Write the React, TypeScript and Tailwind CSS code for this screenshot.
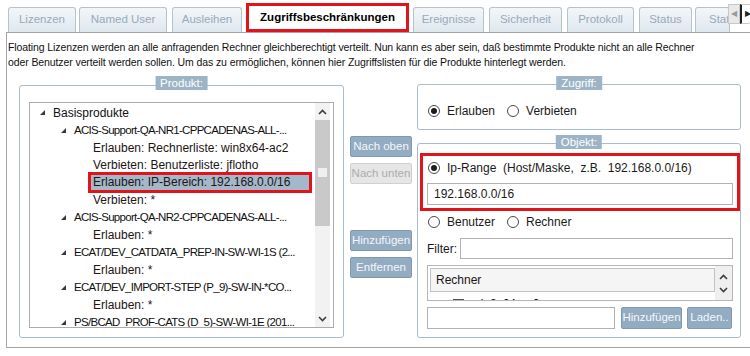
import React from 'react'

const tabs = [
  { label: 'Lizenzen', cls: 'ml-[8px] w-[68px] justify-center' },
  { label: 'Named User', cls: 'ml-[3px] w-[88px] justify-center' },
  { label: 'Ausleihen', cls: 'ml-[5px] w-[70px] justify-center' },
  { label: 'Zugriffsbeschränkungen', cls: 'ml-[4px] w-[163px]', active: true },
  { label: 'Ereignisse', cls: 'ml-[4px] w-[71px] justify-center' },
  { label: 'Sicherheit', cls: 'ml-[5px] w-[73px] justify-center' },
  { label: 'Protokoll', cls: 'ml-[5px] w-[67px] justify-center' },
  { label: 'Status', cls: 'ml-[5px] w-[53px] justify-center' },
  { label: 'Status', cls: 'ml-[3px] w-[35px] justify-start pl-[13px]' },
]

type Row = { level: 0 | 1 | 2; text: string; selected?: boolean }

const rows: Row[] = [
  { level: 0, text: 'Basisprodukte' },
  { level: 1, text: 'ACIS-Support-QA-NR1-CPPCADENAS-ALL-...' },
  { level: 2, text: 'Erlauben: Rechnerliste: win8x64-ac2' },
  { level: 2, text: 'Verbieten: Benutzerliste: jflotho' },
  { level: 2, text: 'Erlauben: IP-Bereich: 192.168.0.0/16', selected: true },
  { level: 2, text: 'Verbieten: *' },
  { level: 1, text: 'ACIS-Support-QA-NR2-CPPCADENAS-ALL-...' },
  { level: 2, text: 'Erlauben: *' },
  { level: 1, text: 'ECAT/DEV_CATDATA_PREP-IN-SW-WI-1S (2...' },
  { level: 2, text: 'Erlauben: *' },
  { level: 1, text: 'ECAT/DEV_IMPORT-STEP (P_9)-SW-IN-*CO...' },
  { level: 2, text: 'Erlauben: *' },
  { level: 1, text: 'PS/BCAD_PROF-CATS (D_5)-SW-WI-1E (201...' },
]

function Expander() {
  return (
    <svg width="5" height="5" viewBox="0 0 5 5" className="shrink-0">
      <polygon points="5,0 5,5 0,5" fill="#3a3a3a" />
    </svg>
  )
}

function Chevron({ down }: { down?: boolean }) {
  return (
    <svg width="9" height="6" viewBox="0 0 9 6">
      <polyline
        points={down ? '1,1 4.5,4.5 8,1' : '1,5 4.5,1.5 8,5'}
        fill="none"
        stroke="#3c3c3c"
        strokeWidth="1.6"
      />
    </svg>
  )
}

function Radio({ checked, label, className = '' }: { checked?: boolean; label: string; className?: string }) {
  return (
    <div className={`flex h-[14px] items-center ${className}`}>
      <span className="flex h-[12px] w-[12px] shrink-0 items-center justify-center rounded-full border border-[#4a4a4a] bg-white">
        {checked && <span className="h-[6px] w-[6px] rounded-full bg-[#1c1c1c]" />}
      </span>
      <span className="ml-[7px] text-[12px] leading-[14px] text-[#1a1a1a]">{label}</span>
    </div>
  )
}

function Legend({ children, className = '' }: { children: React.ReactNode; className?: string }) {
  return (
    <span
      className={`absolute left-1/2 -translate-x-1/2 bg-[#9db3c6] px-[5px] text-[11.5px] leading-[14px] text-white ${className}`}
    >
      {children}
    </span>
  )
}

function Button({ children, className = '', disabled }: { children: React.ReactNode; className?: string; disabled?: boolean }) {
  return (
    <div
      className={`flex items-center justify-center rounded-[2px] border text-[11.5px] ${
        disabled ? 'border-[#d0d0d0] bg-[#e6e6e6] text-[#acacac]' : 'border-[#7f99ae] bg-[#93acc1] text-[#f4f7fa]'
      } ${className}`}
    >
      {children}
    </div>
  )
}

export default function App() {
  return (
    <div className="relative h-[356px] w-[750px] overflow-hidden bg-white font-['Liberation_Sans',Arial,sans-serif] text-black">
      {/* Tabs */}
      <div className="flex h-[32px] items-end">
        {tabs.map((t, i) =>
          t.active ? (
            <div
              key={i}
              className={`flex h-[29px] shrink-0 items-center justify-center border-[3px] border-[#e3131b] bg-white text-[11.5px] font-bold ${t.cls}`}
            >
              {t.label}
            </div>
          ) : (
            <div
              key={i}
              className={`flex h-[25px] shrink-0 items-center overflow-hidden whitespace-nowrap rounded-t-[3px] border border-b-0 border-[#b4c3d0] bg-gradient-to-b from-[#f3f6f9] to-[#dfe8ef] text-[11.5px] text-[#98aabb] ${t.cls}`}
            >
              {t.label}
            </div>
          ),
        )}
      </div>
      {/* tab scroll arrows */}
      <div className="absolute left-[728px] top-[4px] flex h-[20px] w-[12px] items-center justify-center border border-[#c8c8c8] bg-[#e9e9e9] text-[8px] text-[#9a9a9a]">
        ◀
      </div>
      <div className="absolute left-[740px] top-[4px] flex h-[20px] w-[14px] items-center border border-l-2 border-[#c8c8c8] border-l-[#222] bg-white pl-[3px] text-[8px] text-[#222]">
        ▶
      </div>

      {/* Pane */}
      <div className="ml-[6px] h-[316px] border-b border-l border-t border-[#a5a5a5]">
        <p className="pl-[1px] pt-[7px] text-[10.5px] leading-[15px] tracking-[-0.1px] text-[#111]">
          Floating Lizenzen werden an alle anfragenden Rechner gleichberechtigt verteilt. Nun kann es aber sein, daß bestimmte Produkte nicht an alle Rechner
          <br />
          oder Benutzer verteilt werden sollen. Um das zu ermöglichen, können hier Zugriffslisten für die Produkte hinterlegt werden.
        </p>

        <div className="mt-[14px] flex items-start">
          {/* Produkt group */}
          <div className="relative ml-[12px] mt-[1px] h-[253px] w-[325px] rounded-[3px] border border-[#a7bccc] px-[9px] pb-[9px] pt-[16px]">
            <Legend className="-top-[10px]">Produkt:</Legend>
            <div className="flex h-[226px] border border-[#ababab] bg-white">
              <div className="min-w-0 flex-1 overflow-hidden pt-[1px]">
                {rows.map((r, i) => {
                  if (r.level === 2) {
                    return (
                      <div key={i} className="flex h-[17.5px] items-center whitespace-nowrap pl-[61px] text-[12px] text-[#231414]">
                        {r.selected ? (
                          <span className="h-[15px] w-[218px] shrink-0 bg-[#a3b8c9] pl-[2px] leading-[15px] outline-[3px] outline-[#e3131b] outline-solid">
                            {r.text}
                          </span>
                        ) : (
                          <span className="shrink-0 pl-[2px]">{r.text}</span>
                        )}
                      </div>
                    )
                  }
                  return (
                    <div
                      key={i}
                      className={`flex h-[17.5px] items-center whitespace-nowrap text-[#111] ${
                        r.level === 0 ? 'pl-[10px] text-[12px]' : 'pl-[31px] text-[11.5px] tracking-[-0.7px]'
                      }`}
                    >
                      <Expander />
                      <span className="ml-[8px] shrink-0">{r.text}</span>
                    </div>
                  )
                })}
              </div>
              {/* scrollbar */}
              <div className="mr-[3px] flex w-[15px] shrink-0 flex-col bg-[#f2f2f2]">
                <div className="flex h-[17px] items-center justify-center">
                  <Chevron />
                </div>
                <div className="flex h-[106px] items-center justify-center bg-[#c9c9c9]">
                  <span className="mt-[-2px] h-[9px] w-[9px] bg-[#efefef]" />
                </div>
                <div className="flex-1" />
                <div className="flex h-[17px] items-center justify-center">
                  <Chevron down />
                </div>
              </div>
            </div>
          </div>

          {/* Middle buttons */}
          <div className="ml-[6px] flex w-[62px] flex-col">
            <Button className="mt-[52px] h-[21px]">Nach oben</Button>
            <Button className="mt-[6px] h-[21px]" disabled>
              Nach unten
            </Button>
            <Button className="mt-[46px] h-[21px]">Hinzufügen</Button>
            <Button className="mt-[6px] h-[21px]">Entfernen</Button>
          </div>

          {/* Right column */}
          <div className="ml-[5px] flex w-[324px] flex-col">
            <div className="relative h-[46px] rounded-[3px] border border-[#a7bccc] pl-[10px] pt-[19px]">
              <Legend className="-top-[9px]">Zugriff:</Legend>
              <div className="flex">
                <Radio checked label="Erlauben" />
                <Radio label="Verbieten" className="ml-[12px]" />
              </div>
            </div>

            <div className="relative mt-[13px] h-[195px] rounded-[3px] border border-[#a7bccc]">
              <Legend className="-top-[9px]">Objekt:</Legend>
              <div className="ml-[2px] mt-[9px] flex h-[58px] flex-col border-[3px] border-[#e3131b] px-[4px] pt-[5px]">
                <Radio checked label="Ip-Range  (Host/Maske,  z.B.  192.168.0.0/16)" className="ml-[1px] whitespace-pre" />
                <div className="mt-[8px] flex h-[22px] items-center border border-[#b2b2b2] pl-[6px] text-[12px] text-[#1a1a1a]">
                  192.168.0.0/16
                </div>
              </div>
              <div className="ml-[10px] mt-[4px] flex">
                <Radio label="Benutzer" />
                <Radio label="Rechner" className="ml-[12px]" />
              </div>
              <div className="ml-[9px] mr-[7px] mt-[9px] flex h-[21px] items-center">
                <span className="w-[33px] text-[12px] text-[#1a1a1a]">Filter:</span>
                <div className="h-[21px] flex-1 border border-[#b2b2b2]" />
              </div>
              <div className="ml-[9px] mr-[7px] mt-[6px] flex h-[36px] overflow-hidden border border-[#b6b6b6]">
                <div className="flex-1 overflow-hidden pl-[2px] pt-[2px]">
                  <div className="flex h-[24px] items-center border border-[#c2c2c2] bg-[#f5f5f5] pl-[5px] text-[12px] text-[#231414]">
                    Rechner
                  </div>
                  <div className="mt-[3px] flex items-center pl-[23px] text-[12px]">
                    <span className="h-[11px] w-[11px] border border-[#555]" />
                    <span className="ml-[8px]">win8x64-ac2</span>
                  </div>
                </div>
                <div className="flex w-[17px] flex-col items-center justify-center gap-[7px] bg-[#efefef]">
                  <Chevron />
                  <Chevron down />
                </div>
              </div>
              <div className="ml-[9px] mt-[6px] flex h-[22px]">
                <div className="w-[188px] border border-[#b2b2b2]" />
                <Button className="ml-[6px] h-[22px] w-[61px]">Hinzufügen</Button>
                <Button className="ml-[5px] h-[22px] w-[45px]">Laden..</Button>
              </div>
            </div>
          </div>
        </div>
      </div>
    </div>
  )
}
